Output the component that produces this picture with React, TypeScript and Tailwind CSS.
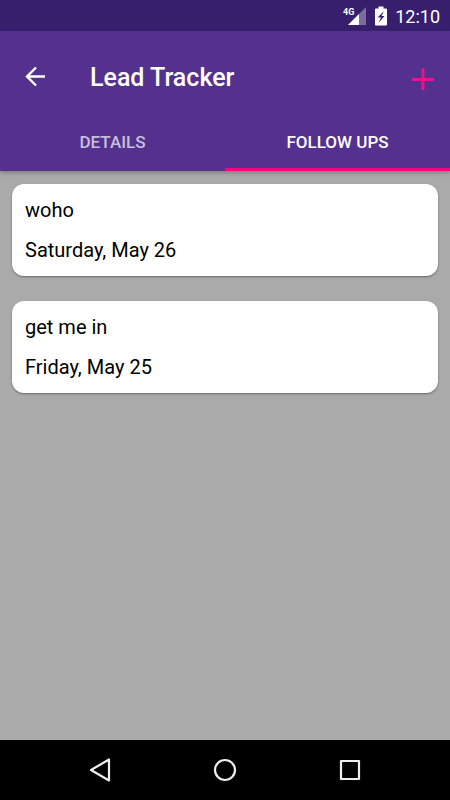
import React from "react";

const followUps = [
    { title: "woho", date: "Saturday, May 26" },
    { title: "get me in", date: "Friday, May 25" },
];

const StatusBar: React.FC = () => {
    return (
        <div className="h-[31px] bg-[#371f6e] text-white flex items-center justify-end pr-[10px]">
            <svg className="w-6 h-5 mr-[9px]" viewBox="0 0 24 20" aria-label="4G signal">
                <path d="M24 1V19H6Z" fill="#fff" fillOpacity="0.35" />
                <path d="M17 8V19H6Z" fill="#fff" />
                <text x="1" y="9" fill="#fff" stroke="#371f6e" strokeWidth="1.5" paintOrder="stroke" fontSize="9" fontWeight="700" fontFamily="Roboto, sans-serif">4G</text>
            </svg>
            <svg className="w-3 h-5 mr-2" viewBox="0 0 12 20" aria-label="Battery charging">
                <path d="M3.5 0.5h5V2.5h2.5a1 1 0 0 1 1 1v15a1 1 0 0 1-1 1H1a1 1 0 0 1-1-1V3.5a1 1 0 0 1 1-1h2.5Z" fill="#fff" />
                <path d="M9 5 2.5 11.5H6L3.5 17 9.5 10H6.5Z" fill="#371f6e" />
            </svg>
            <span className="text-[18px] leading-6 pt-[2px]">12:10</span>
        </div>
    );
};

const Header: React.FC = () => {
    return (
        <header className="relative bg-[#54318e] text-white shadow-[0_2px_4px_rgba(0,0,0,0.25)]">
            <div className="h-[82px] flex items-center pl-[23px] pr-[15px] pt-[10px]">
                <button type="button" aria-label="Back" className="w-6 h-6">
                    <svg className="w-6 h-6" viewBox="0 0 24 24" fill="none" stroke="#fff" strokeWidth="2.4">
                        <path d="M22 11.5H4M13 2.5L4 11.5L13 20.5" />
                    </svg>
                </button>
                <h1 className="flex-1 pl-[43px] pt-[2px] text-[25px] leading-8 font-medium">Lead Tracker</h1>
                <button type="button" aria-label="Add follow up" className="w-6 h-6 mt-1">
                    <svg className="w-6 h-6" viewBox="0 0 24 24" fill="none" stroke="#ee1289" strokeWidth="3">
                        <path d="M1 12.5H23M12 1.5V23" />
                    </svg>
                </button>
            </div>
            <nav className="flex text-[17px] leading-6 font-medium" role="tablist">
                <button type="button" role="tab" aria-selected="false" className="flex-1 h-[58px] pt-[2px] text-white/70 border-b-3 border-transparent">
                    DETAILS
                </button>
                <button type="button" role="tab" aria-selected="true" className="flex-1 h-[58px] pt-[2px] border-b-3 border-[#f5057f]">
                    FOLLOW UPS
                </button>
            </nav>
        </header>
    );
};

const NavBar: React.FC = () => {
    return (
        <div className="h-[60px] bg-black flex items-center justify-center gap-[101px]">
            <button type="button" aria-label="Back">
                <svg className="w-6 h-6" viewBox="0 0 24 24" fill="none" stroke="#eee" strokeWidth="2.2" strokeLinejoin="round">
                    <path d="M21 1.5V22.5L3 12Z" />
                </svg>
            </button>
            <button type="button" aria-label="Home">
                <svg className="w-6 h-6" viewBox="0 0 24 24" fill="none" stroke="#eee" strokeWidth="2.2">
                    <circle cx="12" cy="12" r="10" />
                </svg>
            </button>
            <button type="button" aria-label="Recent apps">
                <svg className="w-6 h-6" viewBox="0 0 24 24" fill="none" stroke="#eee" strokeWidth="2.2" strokeLinejoin="round">
                    <rect x="3" y="3" width="18" height="18" />
                </svg>
            </button>
        </div>
    );
};

const App: React.FC = () => {
    return (
        <div className="min-h-screen flex flex-col bg-[#aaaaaa] font-[Roboto,sans-serif]">
            <StatusBar />
            <Header />
            <main className="flex-1 px-3 py-[13px]">
                <ul className="flex flex-col gap-[25px]">
                    {followUps.map((item) => (
                        <li key={item.title} className="bg-white text-black rounded-xl px-[13px] py-3 text-[20px] leading-7 shadow-[0_1px_2px_rgba(0,0,0,0.4)]">
                            <p>{item.title}</p>
                            <p className="mt-3">{item.date}</p>
                        </li>
                    ))}
                </ul>
            </main>
            <NavBar />
        </div>
    );
};

export default App;
